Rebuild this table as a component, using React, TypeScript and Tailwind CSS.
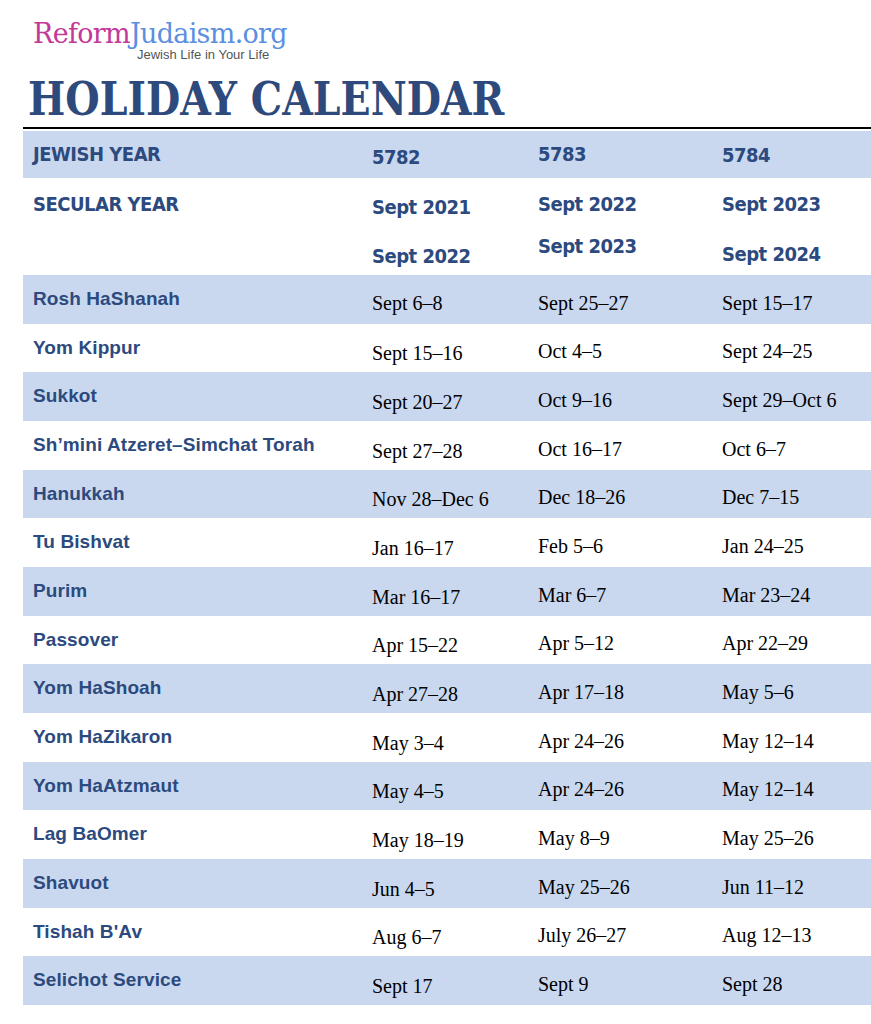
import React from "react";

const rows: [string, string, string, string][] = [
  ["Rosh HaShanah", "Sept 6–8", "Sept 25–27", "Sept 15–17"],
  ["Yom Kippur", "Sept 15–16", "Oct 4–5", "Sept 24–25"],
  ["Sukkot", "Sept 20–27", "Oct 9–16", "Sept 29–Oct 6"],
  ["Sh’mini Atzeret–Simchat Torah", "Sept 27–28", "Oct 16–17", "Oct 6–7"],
  ["Hanukkah", "Nov 28–Dec 6", "Dec 18–26", "Dec 7–15"],
  ["Tu Bishvat", "Jan 16–17", "Feb 5–6", "Jan 24–25"],
  ["Purim", "Mar 16–17", "Mar 6–7", "Mar 23–24"],
  ["Passover", "Apr 15–22", "Apr 5–12", "Apr 22–29"],
  ["Yom HaShoah", "Apr 27–28", "Apr 17–18", "May 5–6"],
  ["Yom HaZikaron", "May 3–4", "Apr 24–26", "May 12–14"],
  ["Yom HaAtzmaut", "May 4–5", "Apr 24–26", "May 12–14"],
  ["Lag BaOmer", "May 18–19", "May 8–9", "May 25–26"],
  ["Shavuot", "Jun 4–5", "May 25–26", "Jun 11–12"],
  ["Tishah B'Av", "Aug 6–7", "July 26–27", "Aug 12–13"],
  ["Selichot Service", "Sept 17", "Sept 9", "Sept 28"],
];

const grid = "grid grid-cols-[327px_166px_184px_1fr]";
const labelFont = "font-['Liberation_Sans',Arial,sans-serif] font-bold text-[19px] tracking-[0.1px] text-[#2c4a7e]";
const headFont = "font-['DejaVu_Sans_Condensed','DejaVu_Sans',sans-serif] font-bold text-[20px] tracking-[-0.5px] text-[#2c4a7e]";
const dateFont = "font-['Liberation_Serif','Times_New_Roman',serif] text-[20px] text-black";

export default function App() {
  return (
    <div className="w-[871px] h-[1024px] bg-white overflow-hidden">
      <div className="pl-[33px] pt-[19px] h-[66px]">
        <div className="font-['DejaVu_Serif',serif] text-[27px] leading-[30px] tracking-[-0.7px]">
          <span className="text-[#c2399a]">Reform</span>
          <span className="text-[#5b8fe0]">Judaism.org</span>
        </div>
        <div className="pl-[104px] -mt-[1px] font-['Liberation_Sans',Arial,sans-serif] text-[13px] leading-[13px] text-[#555]">
          Jewish Life in Your Life
        </div>
      </div>
      <div className="pl-[28px] h-[61px]">
        <h1 className="font-['DejaVu_Serif',serif] font-bold text-[47px] leading-[50px] text-[#2e4a7c] origin-left scale-x-[0.84] whitespace-nowrap pt-[8px]">
          HOLIDAY CALENDAR
        </h1>
      </div>
      <div className="ml-[23px] h-[2px] bg-black" />
      <div className="ml-[23px] mt-[2px]">
        <div className={`${grid} h-[47px] bg-[#c9d8ef] items-center`}>
          <div className={`${headFont} pl-[10px] pb-[2px]`}>JEWISH YEAR</div>
          <div className={`${headFont} pl-[22px] pt-[4px]`}>5782</div>
          <div className={`${headFont} pl-[22px] pb-[2px]`}>5783</div>
          <div className={`${headFont} pl-[22px]`}>5784</div>
        </div>
        <div className={`${grid} h-[97px] bg-white`}>
          <div className={`${headFont} pl-[10px] pt-[14px] leading-[24px]`}>SECULAR YEAR</div>
          <div className={`${headFont} pl-[22px] pt-[17px] leading-[24px] flex flex-col gap-[25px]`}>
            <span>Sept 2021</span>
            <span>Sept 2022</span>
          </div>
          <div className={`${headFont} pl-[22px] pt-[14px] leading-[24px] flex flex-col gap-[18px]`}>
            <span>Sept 2022</span>
            <span>Sept 2023</span>
          </div>
          <div className={`${headFont} pl-[22px] pt-[14px] leading-[24px] flex flex-col gap-[26px]`}>
            <span>Sept 2023</span>
            <span>Sept 2024</span>
          </div>
        </div>
        {rows.map((r, i) => (
          <div
            key={r[0]}
            className={`${grid} h-[48.67px] items-center ${i % 2 === 0 ? "bg-[#c9d8ef]" : "bg-white"}`}
          >
            <div className={`${labelFont} pl-[10px] whitespace-nowrap`}>{r[0]}</div>
            <div className={`${dateFont} pl-[22px] ${i === 0 ? "pt-[8px]" : "pt-[11px]"} whitespace-nowrap`}>{r[1]}</div>
            <div className={`${dateFont} pl-[22px] pt-[7px] whitespace-nowrap`}>{r[2]}</div>
            <div className={`${dateFont} pl-[22px] pt-[7px] whitespace-nowrap`}>{r[3]}</div>
          </div>
        ))}
      </div>
    </div>
  );
}
